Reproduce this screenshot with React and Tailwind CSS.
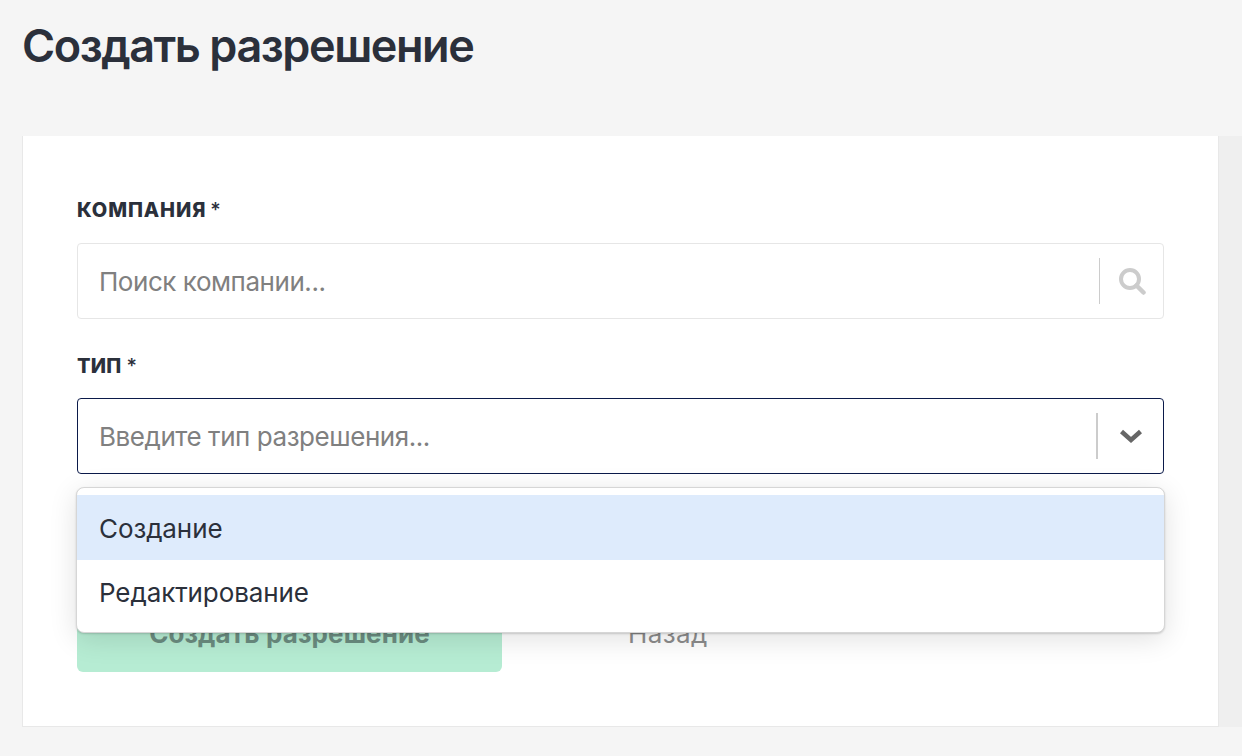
import { useState } from 'react';

function App() {
  const [options] = useState(['Создание', 'Редактирование']);

  return (
    <div className="h-[756px] w-[1242px] overflow-hidden bg-[#f5f5f5] font-['Inter',sans-serif] text-[#2b303b]">
      <div className="h-[136px] pl-[22px] pt-[18px]">
        <h1 className="text-[45px] leading-[56px] font-semibold tracking-[-1.45px]">Создать разрешение</h1>
      </div>

      <div className="flex h-[591px] pl-[22px]">
        <div className="h-full w-[1197px] border-r border-b border-l border-[#e8e8e8] bg-white pl-[54px] pr-[54px] pt-[60px]">
          <label className="block h-[47px] text-[20px] leading-[28px] font-extrabold uppercase">
            <span className="tracking-[0.9px]">Компания</span>
            <span className="ml-[4px] font-medium">*</span>
          </label>
          <div className="flex h-[76px] items-center rounded-[4px] border border-[#e6e6e6] bg-white pl-[21px]">
            <span className="flex-1 pt-[1px] text-[26px] tracking-[-0.45px] text-[#808080]">Поиск компании...</span>
            <div className="flex items-center">
              <div className="h-[46px] w-px bg-[#cccccc]"></div>
              <div className="flex w-[63px] justify-center">
                <svg width="28" height="28" viewBox="0 0 28 28" fill="none" stroke="#cccccc">
                  <circle cx="12" cy="12" r="9" strokeWidth="4" />
                  <path d="M18.5 18.5L25.5 25.5" strokeWidth="4.5" strokeLinecap="round" />
                </svg>
              </div>
            </div>
          </div>

          <label className="mt-[33px] block h-[46px] text-[20px] leading-[28px] font-extrabold uppercase">
            <span className="tracking-[0.2px]">Тип</span>
            <span className="ml-[5px] font-medium">*</span>
          </label>
          <div className="relative">
            <div className="flex h-[76px] items-center rounded-[4px] border border-[#0b1a4a] bg-white pl-[21px]">
              <span className="flex-1 pt-[1px] text-[26px] tracking-[-0.45px] text-[#808080]">Введите тип разрешения...</span>
              <div className="flex items-center">
                <div className="h-[46px] w-[2px] bg-[#cccccc]"></div>
                <div className="flex w-[65px] justify-center">
                  <svg width="24" height="16" viewBox="0 0 24 16" fill="none" stroke="#666666" strokeWidth="4.5">
                    <path d="M2.5 3.5L12 12L21.5 3.5" />
                  </svg>
                </div>
              </div>
            </div>

            <div className="absolute -left-px -right-px top-[89px] z-10 h-[146px] rounded-[8px] border border-[#d6d6d6] bg-white py-[7px] shadow-[0_1px_2px_rgba(0,0,0,0.16),0_6px_28px_rgba(0,0,0,0.12)]">
              {options.map((option, i) => (
                <div
                  key={option}
                  className={i === 0
                    ? 'flex h-[65px] items-center bg-[#deebfc] pl-[22px] pt-[2px] text-[26px] tracking-[-0.1px]'
                    : 'flex h-[64px] items-center pl-[22px] text-[26px] tracking-[-0.1px]'}
                >
                  {option}
                </div>
              ))}
            </div>
          </div>

          <div className="mt-[122px] flex items-center">
            <button className="h-[76px] w-[425px] rounded-[6px] bg-[#b6ecd3] pb-[2px] text-[26px] font-bold tracking-[0.1px] text-[#6b8c80]">
              Создать разрешение
            </button>
            <button className="ml-[126px] pb-[2px] text-[26px] tracking-[0.4px] text-[#8c8c8c]">Назад</button>
          </div>
        </div>
        <div className="h-full flex-1 bg-[#efefef]"></div>
      </div>
    </div>
  );
}

export default App;
